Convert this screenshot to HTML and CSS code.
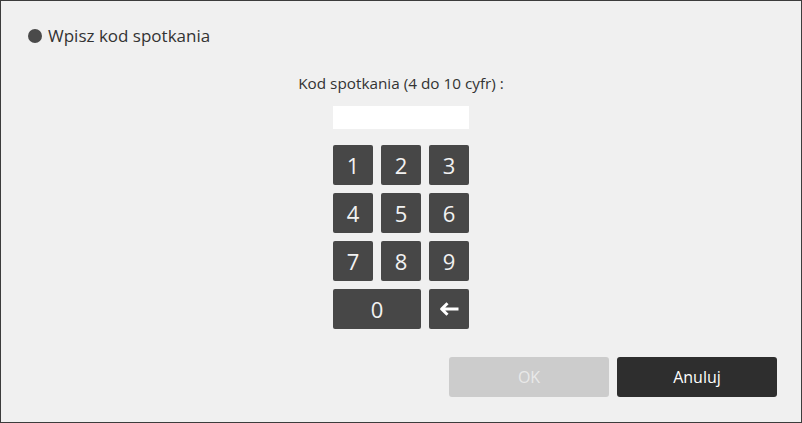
FILE: index.html
```html
<!DOCTYPE html>
<html lang="pl">
<head>
<meta charset="utf-8">
<title>Wpisz kod spotkania</title>
<link rel="stylesheet" href="styles.css">
</head>
<body>
<div class="dialog">
  <div class="title">
    <span class="bullet"></span>
    <span class="title-text">Wpisz kod spotkania</span>
  </div>
  <div class="content">
    <div class="label">Kod spotkania (4 do 10 cyfr) :</div>
    <div class="code-input"></div>
    <div class="keypad">
      <div class="key">1</div>
      <div class="key">2</div>
      <div class="key">3</div>
      <div class="key">4</div>
      <div class="key">5</div>
      <div class="key">6</div>
      <div class="key">7</div>
      <div class="key">8</div>
      <div class="key">9</div>
      <div class="key key-wide">0</div>
      <div class="key key-back">
        <svg width="20" height="14" viewBox="0 0 20 14" aria-hidden="true">
          <path d="M8.5 1.2 L2.6 7 L8.5 12.8 M2.6 7 H19.5" fill="none" stroke="#ffffff" stroke-width="3" stroke-linejoin="round"/>
        </svg>
      </div>
    </div>
  </div>
  <div class="footer">
    <div class="btn btn-ok">OK</div>
    <div class="btn btn-cancel">Anuluj</div>
  </div>
</div>
</body>
</html>
```

FILE: styles.css
```css
html, body {
  margin: 0;
  padding: 0;
  background: #f0f0f0;
}

body {
  font-family: "Open Sans", "Noto Sans", "DejaVu Sans", sans-serif;
  color: #333333;
}

.dialog {
  width: 800px;
  height: 421px;
  border: 1px solid #3c3c3c;
  background: #f0f0f0;
  display: flex;
  flex-direction: column;
}

.title {
  display: flex;
  align-items: center;
  gap: 6px;
  height: 24px;
  margin-top: 23px;
  padding-left: 27px;
}

.bullet {
  width: 14px;
  height: 14px;
  border-radius: 50%;
  background: #4a4a4a;
}

.title-text {
  font-size: 17px;
  line-height: 24px;
  color: #333333;
}

.content {
  display: flex;
  flex-direction: column;
  align-items: center;
}

.label {
  margin-top: 25px;
  font-size: 15.3px;
  line-height: 20px;
  color: #333333;
}

.code-input {
  margin-top: 13px;
  width: 136px;
  height: 23px;
  background: #ffffff;
}

.keypad {
  margin-top: 16px;
  display: grid;
  grid-template-columns: repeat(3, 40px);
  grid-auto-rows: 40px;
  gap: 8px;
}

.key {
  background: #474747;
  border-radius: 2px;
  color: #f2f2f2;
  font-size: 22px;
  font-weight: 400;
  display: flex;
  align-items: center;
  justify-content: center;
}

.key-wide {
  grid-column: span 2;
}

.footer {
  margin-top: 28px;
  padding-right: 24px;
  display: flex;
  justify-content: flex-end;
  gap: 8px;
}

.btn {
  width: 160px;
  height: 40px;
  border-radius: 3px;
  display: flex;
  align-items: center;
  justify-content: center;
  font-size: 16px;
}

.btn-ok {
  background: #cccccc;
  color: #e9e9e9;
}

.btn-cancel {
  background: #2e2e2e;
  color: #ffffff;
}
```
